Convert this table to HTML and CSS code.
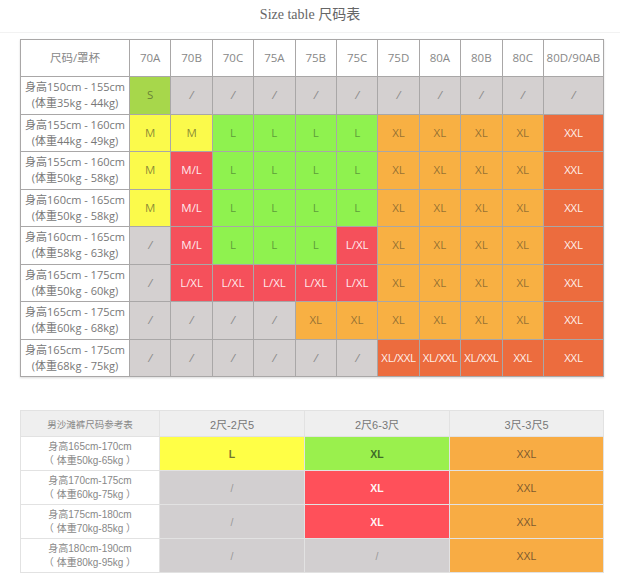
FILE: index.html
```html
<!DOCTYPE html>
<html lang="zh">
<head>
<meta charset="utf-8">
<title>Size table 尺码表</title>
<link rel="stylesheet" href="styles.css">
</head>
<body>
<div class="page">
  <h1 class="title">Size table 尺码表</h1>
  <table class="bra">
    <colgroup>
      <col class="c-label">
      <col class="c-d"><col class="c-d"><col class="c-d"><col class="c-d"><col class="c-d">
      <col class="c-d"><col class="c-d"><col class="c-d"><col class="c-d"><col class="c-d">
      <col class="c-last">
    </colgroup>
    <thead>
      <tr>
        <th>尺码/罩杯</th><th>70A</th><th>70B</th><th>70C</th><th>75A</th><th>75B</th><th>75C</th><th>75D</th><th>80A</th><th>80B</th><th>80C</th><th>80D/90AB</th>
      </tr>
    </thead>
    <tbody>
      <tr>
        <td class="lab">身高150cm - 155cm<br>(体重35kg - 44kg)</td>
        <td class="s">S</td><td class="g">/</td><td class="g">/</td><td class="g">/</td><td class="g">/</td><td class="g">/</td><td class="g">/</td><td class="g">/</td><td class="g">/</td><td class="g">/</td><td class="g">/</td>
      </tr>
      <tr>
        <td class="lab">身高155cm - 160cm<br>(体重44kg - 49kg)</td>
        <td class="y">M</td><td class="y">M</td><td class="gr">L</td><td class="gr">L</td><td class="gr">L</td><td class="gr">L</td><td class="o">XL</td><td class="o">XL</td><td class="o">XL</td><td class="o">XL</td><td class="d">XXL</td>
      </tr>
      <tr>
        <td class="lab">身高155cm - 160cm<br>(体重50kg - 58kg)</td>
        <td class="y">M</td><td class="r">M/L</td><td class="gr">L</td><td class="gr">L</td><td class="gr">L</td><td class="gr">L</td><td class="o">XL</td><td class="o">XL</td><td class="o">XL</td><td class="o">XL</td><td class="d">XXL</td>
      </tr>
      <tr>
        <td class="lab">身高160cm - 165cm<br>(体重50kg - 58kg)</td>
        <td class="y">M</td><td class="r">M/L</td><td class="gr">L</td><td class="gr">L</td><td class="gr">L</td><td class="gr">L</td><td class="o">XL</td><td class="o">XL</td><td class="o">XL</td><td class="o">XL</td><td class="d">XXL</td>
      </tr>
      <tr>
        <td class="lab">身高160cm - 165cm<br>(体重58kg - 63kg)</td>
        <td class="g">/</td><td class="r">M/L</td><td class="gr">L</td><td class="gr">L</td><td class="gr">L</td><td class="r">L/XL</td><td class="o">XL</td><td class="o">XL</td><td class="o">XL</td><td class="o">XL</td><td class="d">XXL</td>
      </tr>
      <tr>
        <td class="lab">身高165cm - 175cm<br>(体重50kg - 60kg)</td>
        <td class="g">/</td><td class="r">L/XL</td><td class="r">L/XL</td><td class="r">L/XL</td><td class="r">L/XL</td><td class="r">L/XL</td><td class="o">XL</td><td class="o">XL</td><td class="o">XL</td><td class="o">XL</td><td class="d">XXL</td>
      </tr>
      <tr>
        <td class="lab">身高165cm - 175cm<br>(体重60kg - 68kg)</td>
        <td class="g">/</td><td class="g">/</td><td class="g">/</td><td class="g">/</td><td class="o">XL</td><td class="o">XL</td><td class="o">XL</td><td class="o">XL</td><td class="o">XL</td><td class="o">XL</td><td class="d">XXL</td>
      </tr>
      <tr>
        <td class="lab">身高165cm - 175cm<br>(体重68kg - 75kg)</td>
        <td class="g">/</td><td class="g">/</td><td class="g">/</td><td class="g">/</td><td class="g">/</td><td class="g">/</td><td class="d">XL/XXL</td><td class="d">XL/XXL</td><td class="d">XL/XXL</td><td class="d">XXL</td><td class="d">XXL</td>
      </tr>
    </tbody>
  </table>

  <table class="beach">
    <colgroup>
      <col class="b1"><col class="b2"><col class="b3"><col class="b4">
    </colgroup>
    <thead>
      <tr><th class="small">男沙滩裤尺码参考表</th><th>2尺-2尺5</th><th>2尺6-3尺</th><th>3尺-3尺5</th></tr>
    </thead>
    <tbody>
      <tr>
        <td class="lab">身高165cm-170cm<br>（ 体重50kg-65kg ）</td>
        <td class="y">L</td><td class="gr">XL</td><td class="o">XXL</td>
      </tr>
      <tr>
        <td class="lab">身高170cm-175cm<br>（ 体重60kg-75kg ）</td>
        <td class="g">/</td><td class="r">XL</td><td class="o">XXL</td>
      </tr>
      <tr>
        <td class="lab">身高175cm-180cm<br>（ 体重70kg-85kg ）</td>
        <td class="g">/</td><td class="r">XL</td><td class="o">XXL</td>
      </tr>
      <tr>
        <td class="lab">身高180cm-190cm<br>（ 体重80kg-95kg ）</td>
        <td class="g">/</td><td class="g">/</td><td class="o">XXL</td>
      </tr>
    </tbody>
  </table>
</div>
</body>
</html>
```

FILE: styles.css
```css
html, body {
  margin: 0;
  padding: 0;
  background: #ffffff;
}

.page {
  width: 620px;
  padding: 0 0 0 20px;
  box-sizing: border-box;
  font-family: "Open Sans", "Noto Sans CJK SC", sans-serif;
}

.title {
  margin: 0 0 0 -20px;
  height: 33px;
  box-sizing: border-box;
  padding-top: 5px;
  border-bottom: 1px solid #f2f2f2;
  text-align: center;
  font-family: "Liberation Serif", "Noto Sans CJK SC", serif;
  font-weight: normal;
  font-size: 14px;
  line-height: 20px;
  color: #666;
}

table {
  border-collapse: collapse;
  table-layout: fixed;
  width: 583px;
}

/* ---------- top table ---------- */
.bra {
  margin-top: 6px;
  border: 1px solid #aaa;
  box-shadow: 0 1px 2px rgba(0,0,0,0.15);
}

.bra .c-label { width: 109px; }
.bra .c-d { width: 41.4px; }
.bra .c-last { width: 60px; }

.bra th,
.bra td {
  border: 1px solid #a9a7a7;
  text-align: center;
  vertical-align: middle;
  padding: 0;
  font-size: 11.5px;
  font-weight: normal;
  line-height: 16px;
  color: #888;
  white-space: nowrap;
}

.bra th {
  height: 36px;
  background: #fff;
  color: #888;
  font-size: 11.5px;
}

.bra td {
  height: 36.5px;
}

.bra td.lab {
  background: #fff;
  color: #777;
  font-size: 11px;
  line-height: 16px;
}

/* colour cells */
td.g  { background: #d4d0d0; color: #8a8a8a; font-style: italic; }
td.s  { background: #a7d74b; color: rgba(60,70,40,0.6); }
td.y  { background: #fbfa4b; color: rgba(60,60,40,0.6); }
td.gr { background: #8ff24f; color: rgba(50,80,40,0.55); }
td.r  { background: #f5505b; color: rgba(255,255,255,0.9); }
td.o  { background: #f8b043; color: rgba(80,70,40,0.6); }
td.d  { background: #ec6c3e; color: rgba(255,255,255,0.9); }

.bra td.d { letter-spacing: -0.3px; }

/* ---------- bottom table ---------- */
.beach {
  margin-top: 33px;
}

.beach .b1 { width: 139px; }
.beach .b2 { width: 145px; }
.beach .b3 { width: 145px; }
.beach .b4 { width: 154px; }

.beach th,
.beach td {
  border: 1px solid #e2e2e2;
  text-align: center;
  vertical-align: middle;
  padding: 0;
  font-size: 10.5px;
  font-weight: normal;
  color: #888;
  font-family: "Liberation Sans", "Noto Sans CJK SC", sans-serif;
}

.beach th {
  height: 25px;
  background: #efefef;
  color: #777;
  font-size: 11px;
}

.beach th.small {
  font-size: 9.5px;
  color: #888;
}

.beach td {
  height: 33px;
  line-height: 14px;
}

.beach td.lab {
  background: #fff;
  color: #888;
  font-size: 10px;
}

.beach td.g  { background: #d2cfd0; font-style: normal; color: #999; }
.beach td.y  { background: #ffff46; color: rgba(70,70,40,0.75); font-weight: bold; }
.beach td.gr { background: #9af04d; color: rgba(40,70,30,0.8); font-weight: bold; }
.beach td.r  { background: #ff505a; color: rgba(255,255,255,0.95); font-weight: bold; }
.beach td.o  { background: #f8ac44; color: rgba(80,60,40,0.75); }
```
